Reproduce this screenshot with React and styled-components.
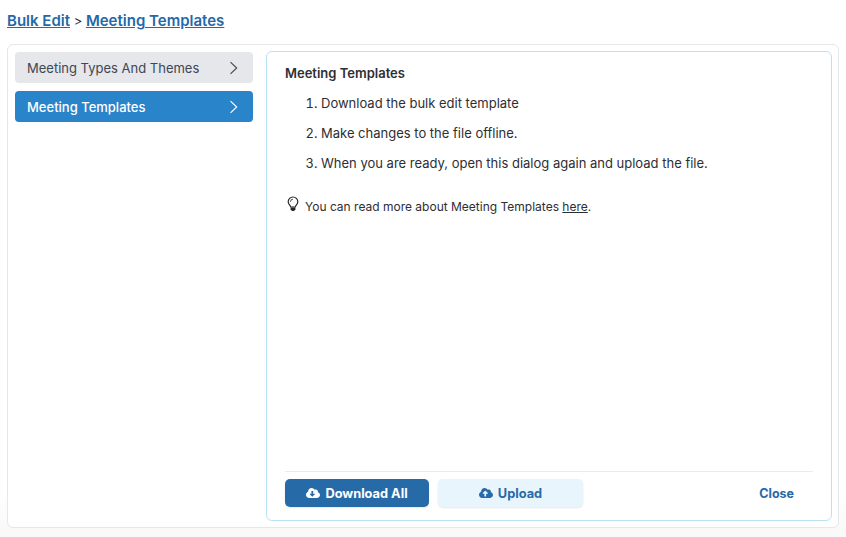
import React from 'react';
import styled, { createGlobalStyle } from 'styled-components';
import { FaCloudDownloadAlt, FaCloudUploadAlt } from 'react-icons/fa';

const GlobalStyle = createGlobalStyle`
html, body {
  margin: 0;
  padding: 0;
  background: #fff;
}
body {
  font-family: Inter, "Liberation Sans", sans-serif;
  color: #2e2e33;
}
`;

const Page = styled.div`
width: 846px;
height: 537px;
box-sizing: border-box;
padding: 11px 7px 9px;
display: flex;
flex-direction: column;
overflow: hidden;
background: linear-gradient(to bottom, #fff 490px, #f9f9f9 530px);
`;

const Crumbs = styled.div`
height: 33px;
font-size: 13px;
color: #2e2e33;
line-height: 20px;
`;

const CrumbLink = styled.a`
font-size: 15px;
font-weight: 600;
color: #2369a8;
text-decoration: underline;
`;

const Shell = styled.div`
flex: 1;
display: flex;
gap: 13px;
padding: 6px 6px 6px 7px;
background: #fff;
border: 1px solid #e5e7eb;
border-radius: 6px;
min-height: 0;
`;

const Side = styled.div`
width: 238px;
flex-shrink: 0;
padding-top: 1px;
display: flex;
flex-direction: column;
gap: 8px;
`;

const SideItem = styled.div`
height: 31px;
box-sizing: border-box;
padding: 0 11px 0 12px;
display: flex;
align-items: center;
justify-content: space-between;
border-radius: 4px;
font-size: 13px;
background: ${(p) => (p.$active ? '#2a84ca' : '#e5e7eb')};
color: ${(p) => (p.$active ? '#fff' : '#3f4654')};
font-weight: ${(p) => (p.$active ? 500 : 400)};
`;

const Panel = styled.div`
flex: 1;
display: flex;
flex-direction: column;
box-sizing: border-box;
padding: 13px 18px 13px;
border: 1px solid #b9e2f5;
border-radius: 6px;
`;

const Title = styled.div`
font-size: 13px;
font-weight: 600;
line-height: 16px;
`;

const Steps = styled.ol`
margin: 12px 0 0;
padding: 0 0 0 36px;
font-size: 13px;
line-height: 20px;
li {
  margin-bottom: 10px;
}
`;

const Note = styled.div`
margin-top: 15px;
display: flex;
align-items: flex-start;
gap: 5px;
font-size: 12px;
line-height: 18px;
a {
  color: inherit;
  text-decoration: underline;
}
svg {
  margin-top: -2px;
  flex-shrink: 0;
}
`;

const Footer = styled.div`
margin-top: auto;
padding-top: 7px;
border-top: 1px solid #e9ebee;
display: flex;
align-items: center;
gap: 9px;
`;

const Button = styled.button`
width: ${(p) => (p.$wide ? 144 : 145)}px;
height: 28px;
border: 0;
border-radius: 5px;
display: flex;
align-items: center;
justify-content: center;
gap: 5px;
font-family: inherit;
font-size: 12.8px;
font-weight: 700;
background: ${(p) => (p.$primary ? '#266aa8' : '#e9f5fd')};
color: ${(p) => (p.$primary ? '#fff' : '#266aa8')};
box-shadow: 0 1px 2px rgba(0, 0, 0, 0.1);
`;

const CloseButton = styled.button`
margin-left: auto;
margin-right: 19px;
border: 0;
padding: 0;
background: none;
font-family: inherit;
font-size: 12.5px;
font-weight: 700;
color: #266aa8;
`;

const Chevron = () => (
  <svg width="16" height="16" viewBox="0 0 16 16" fill="none" stroke="currentColor" strokeWidth="1.1">
    <path d="M4.5 2.2l6.2 5.8-6.2 5.8" />
  </svg>
);

const Bulb = () => (
  <svg width="15" height="16" viewBox="0 0 15 16" fill="none" stroke="#27272a">
    <path
      strokeWidth="1.2"
      d="M5.8 11C5.5 9.4 3.2 8.4 3.2 5.8a4.8 4.8 0 0 1 9.6 0C12.8 8.4 10.5 9.4 10.2 11z"
    />
    <path strokeWidth="0.8" d="M5.4 5.8A2.6 2.6 0 0 1 8 3.2" />
    <path fill="#27272a" stroke="none" d="M5.6 11.6h4.8v2L9 15H7l-1.4-1.4z" />
  </svg>
);

export default function App() {
  return (
    <Page>
      <GlobalStyle />
      <Crumbs>
        <CrumbLink>Bulk Edit</CrumbLink> &gt; <CrumbLink>Meeting Templates</CrumbLink>
      </Crumbs>
      <Shell>
        <Side>
          <SideItem>
            Meeting Types And Themes
            <Chevron />
          </SideItem>
          <SideItem $active>
            Meeting Templates
            <Chevron />
          </SideItem>
        </Side>
        <Panel>
          <Title>Meeting Templates</Title>
          <Steps>
            <li>Download the bulk edit template</li>
            <li>Make changes to the file offline.</li>
            <li>When you are ready, open this dialog again and upload the file.</li>
          </Steps>
          <Note>
            <Bulb />
            <span>
              You can read more about Meeting Templates <a>here</a>.
            </span>
          </Note>
          <Footer>
            <Button $primary $wide>
              <FaCloudDownloadAlt size={14} />
              Download All
            </Button>
            <Button>
              <FaCloudUploadAlt size={14} />
              Upload
            </Button>
            <CloseButton>Close</CloseButton>
          </Footer>
        </Panel>
      </Shell>
    </Page>
  );
}
